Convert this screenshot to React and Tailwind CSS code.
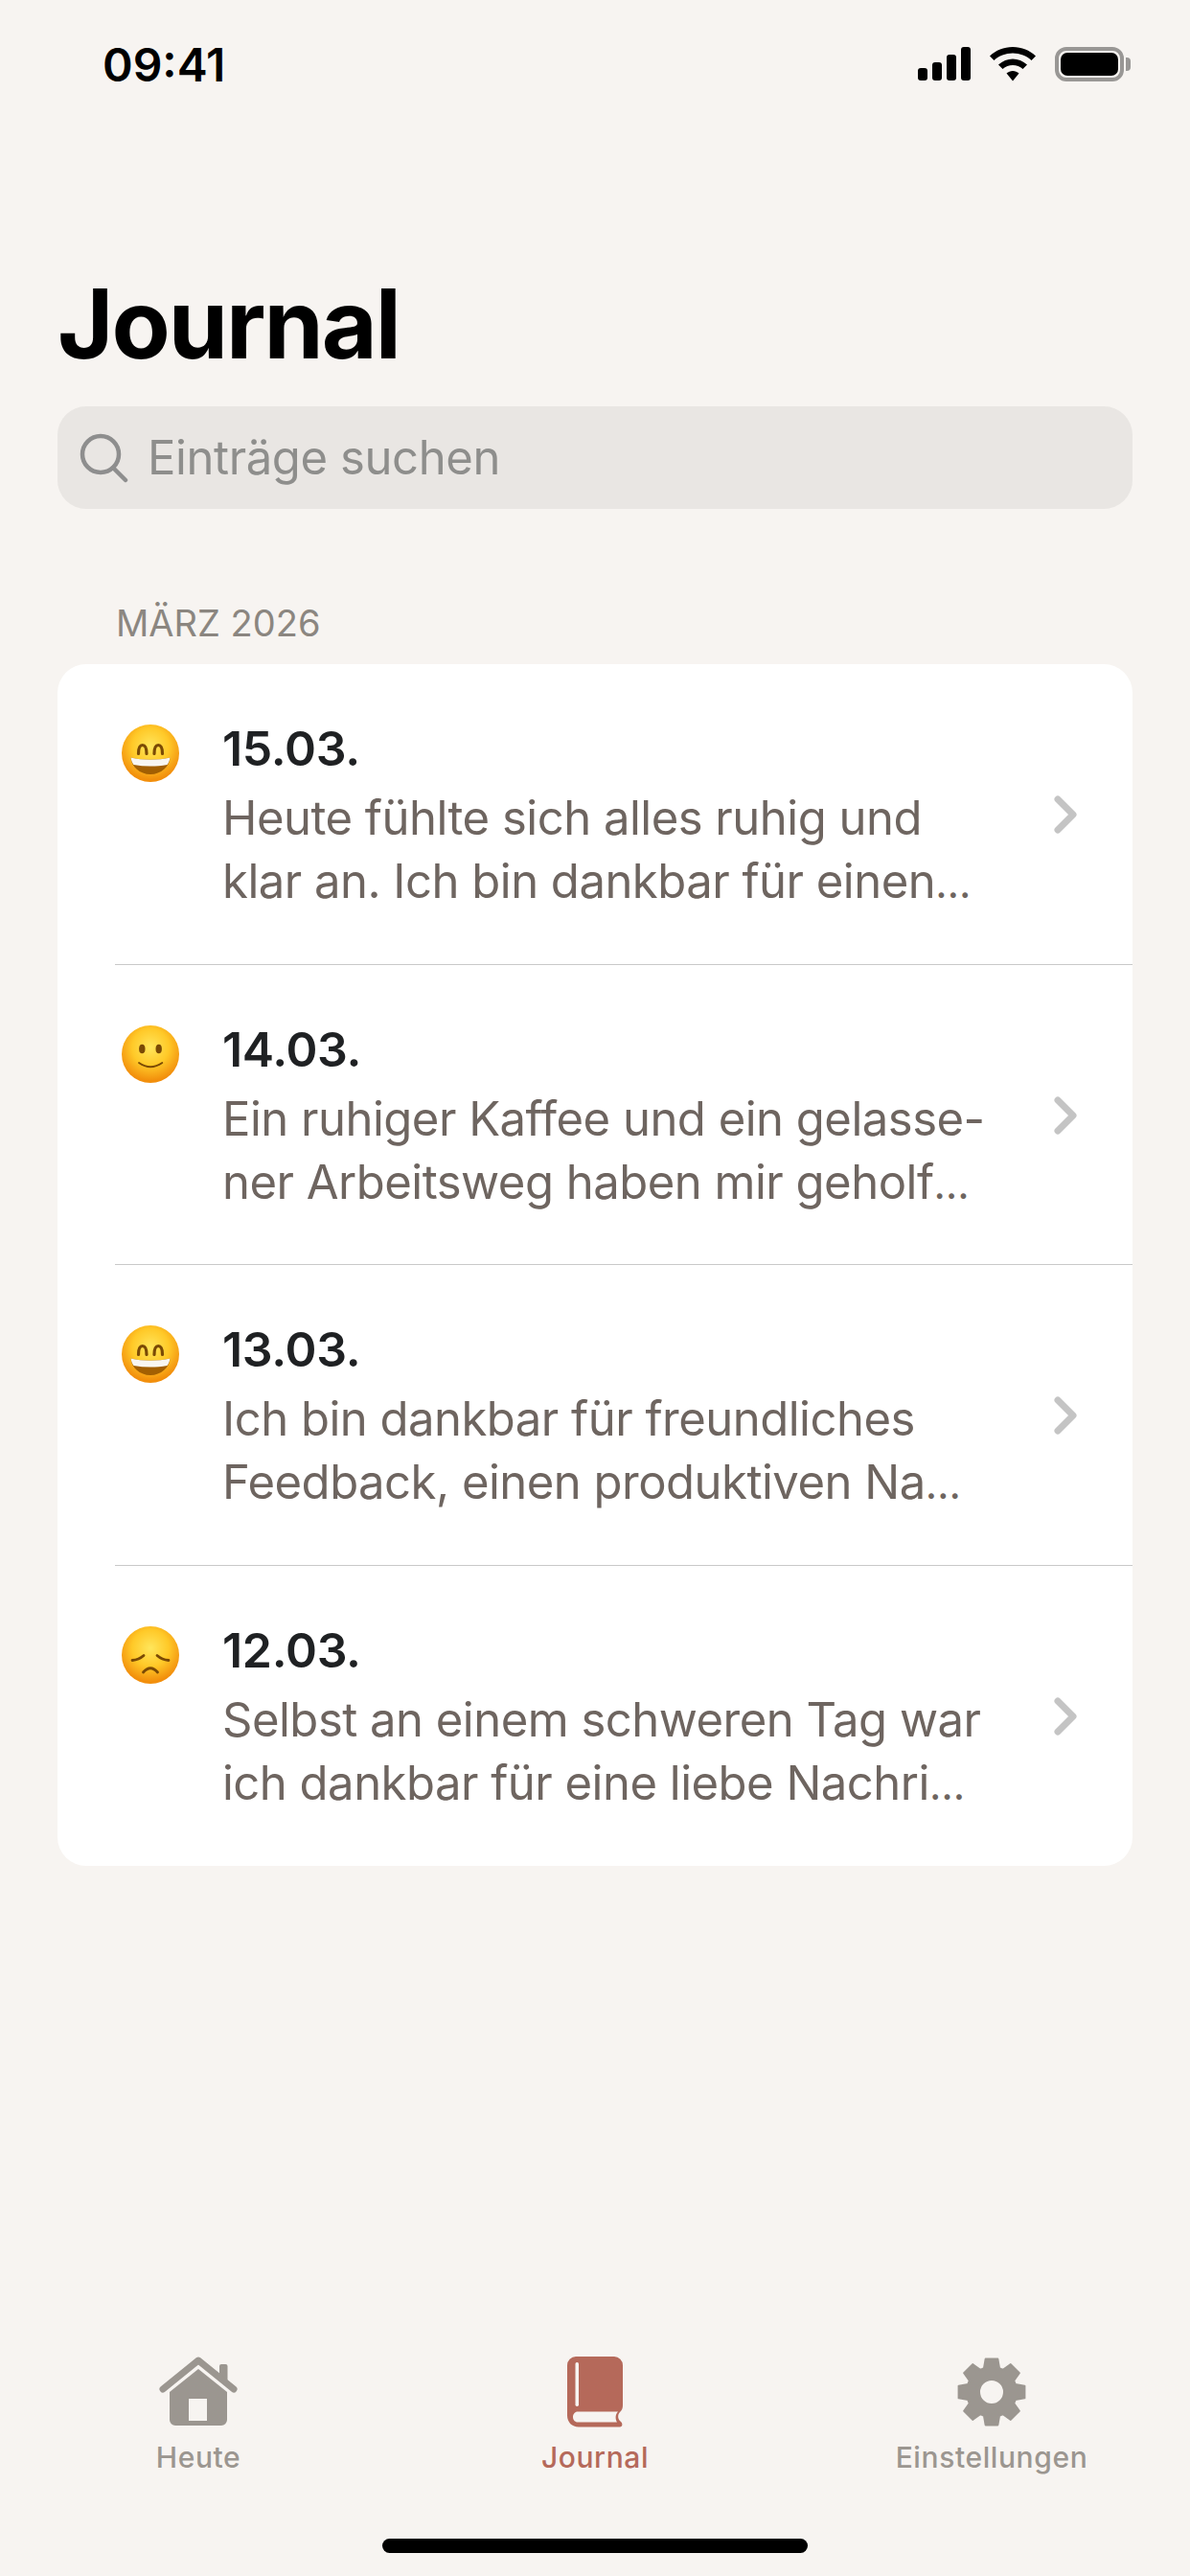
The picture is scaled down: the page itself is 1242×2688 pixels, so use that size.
const entries = [
  { date: "15.03.", mood: "grin", lines: ["Heute fühlte sich alles ruhig und", "klar an. Ich bin dankbar für einen"] },
  { date: "14.03.", mood: "smile", lines: ["Ein ruhiger Kaffee und ein gelasse-", "ner Arbeitsweg haben mir geholf"] },
  { date: "13.03.", mood: "grin", lines: ["Ich bin dankbar für freundliches", "Feedback, einen produktiven Na"] },
  { date: "12.03.", mood: "sad", lines: ["Selbst an einem schweren Tag war", "ich dankbar für eine liebe Nachri"] },
];

function gearPoints() {
  const pts = [];
  for (let i = 0; i < 8; i++) {
    const a = (i * 45 - 90) * (Math.PI / 180);
    const offs = [[26, -18], [35, -10.5], [35, 10.5], [26, 18]];
    offs.forEach(([r, d]) => {
      const t = a + (d * Math.PI) / 180;
      pts.push(`${(36 + r * Math.cos(t)).toFixed(2)},${(36 + r * Math.sin(t)).toFixed(2)}`);
    });
  }
  return pts.join(" ");
}

function Emoji({ mood }) {
  const stroke = "#7a4a05";
  return (
    <svg width="60" height="60" viewBox="0 0 60 60" className="shrink-0">
      <defs>
        <radialGradient id={`face-${mood}`} cx="50%" cy="38%" r="58%">
          <stop offset="0%" stopColor="#ffe65c" />
          <stop offset="55%" stopColor="#ffc928" />
          <stop offset="100%" stopColor="#f28f0c" />
        </radialGradient>
      </defs>
      <circle cx="30" cy="30" r="30" fill={`url(#face-${mood})`} />
      {mood === "grin" && (
        <g>
          <path d="M17.5 30.500C17.500 24 19.500 21.500 21.700 21.500S26 24 26 30.500" fill="none" stroke={stroke} strokeWidth="3.200" strokeLinecap="round" />
          <path d="M34 30.500C34 24 36 21.500 38.200 21.500S42.500 24 42.500 30.500" fill="none" stroke={stroke} strokeWidth="3.200" strokeLinecap="round" />
          <path d="M9.500 34.500C22 37.500 38 37.500 50.500 34.500C50 44 41 52 30 52S10 44 9.500 34.500Z" fill="#a25f02" />
          <path d="M9.500 34.500C22 37.500 38 37.500 50.500 34.500C50 38 49 40 47.500 42C36 44 24 44 12.500 42C11 40 10 38 9.500 34.500Z" fill="#f8f6f2" />
        </g>
      )}
      {mood === "smile" && (
        <g fill={stroke}>
          <ellipse cx="21.3" cy="24.5" rx="3.2" ry="4.7" />
          <ellipse cx="38.7" cy="24.5" rx="3.2" ry="4.7" />
          <path d="M18 39Q30 47.5 42.3 39" fill="none" stroke={stroke} strokeWidth="1.8" strokeLinecap="round" />
        </g>
      )}
      {mood === "sad" && (
        <g fill="none" stroke={stroke} strokeWidth="2.8" strokeLinecap="round">
          <path d="M11 35.5Q18 35 23 30.5" />
          <path d="M49 35.5Q42 35 37 30.5" />
          <path d="M22.5 48Q30 39.5 37.5 48" />
        </g>
      )}
    </svg>
  );
}

function Row({ entry, last }) {
  return (
    <div className={`ml-[60px] h-[313.5px] flex pr-[58px] ${last ? "" : "border-b border-[#c9c9c9]"}`}>
      <div className="ml-[7px] mt-[63px]">
        <Emoji mood={entry.mood} />
      </div>
      <div className="ml-[45px] flex-1 pt-[55px]">
        <div className="text-[50px] leading-[66px] font-semibold text-[#1f2123] tracking-[-0.3px]">{entry.date}</div>
        <div className="mt-[7px] text-[49px] leading-[66px] text-[#6e6560] whitespace-nowrap tracking-[-0.5px]">
          <div>{entry.lines[0]}</div>
          <div>
            {entry.lines[1]}
            <span className="text-[43px]">…</span>
          </div>
        </div>
      </div>
      <div className="flex items-center pt-[2px]">
        <svg width="24" height="40" viewBox="0 0 24 40" fill="none" stroke="#c4c4c4" strokeWidth="7" strokeLinecap="round" strokeLinejoin="round">
          <path d="M4 4L20 20L4 36" />
        </svg>
      </div>
    </div>
  );
}

function Tab({ label, active, children }) {
  return (
    <div className="w-[414px] flex flex-col items-center">
      <div className="h-[74px] flex items-center justify-center">{children}</div>
      <div className={`mt-[11px] text-[30px] leading-[40px] tracking-[0.6px] font-medium ${active ? "text-[#b5695a]" : "text-[#9b9690]"}`}>{label}</div>
    </div>
  );
}

export default function App() {
  return (
    <div className="w-[1242px] h-[2688px] bg-[#f7f4f1] flex flex-col font-['Inter',sans-serif]">
      {/* Status bar */}
      <div className="h-[134px] flex justify-between pt-[44px] pl-[107px] pr-[62px]">
        <div className="text-[48px] leading-[48px] font-semibold text-black">09:41</div>
        <div className="flex items-start gap-[20px] pt-[5px]">
          <svg width="55" height="35" viewBox="0 0 55 35" fill="black">
            <rect x="0" y="22" width="10" height="13" rx="3" />
            <rect x="15" y="16" width="10" height="19" rx="3" />
            <rect x="30" y="8" width="10" height="27" rx="3" />
            <rect x="45" y="0" width="10" height="35" rx="3" />
          </svg>
          <svg width="48" height="36" viewBox="0 0 48 36" fill="black">
            <path d="M24 0C14.5 0 6.500 3.500 0 9.500L4.500 14C9.500 9.300 16.500 6.500 24 6.500S38.500 9.300 43.500 14L48 9.500C41.500 3.500 33.500 0 24 0Z" />
            <path d="M24 12.500C18.500 12.500 13.500 14.500 9 18.500L13.500 23C16.500 20.500 20 19 24 19S31.500 20.500 34.500 23L39 18.500C34.500 14.500 29.500 12.500 24 12.500Z" />
            <path d="M24 25C21.500 25 19.500 26 17.500 27.500L24 35.500L30.500 27.500C28.500 26 26.500 25 24 25Z" />
          </svg>
          <div className="flex items-center">
            <div className="w-[72px] h-[36px] rounded-[12px] border-[4px] border-[#999795] p-[2px]">
              <div className="w-full h-full bg-black rounded-[7px]" />
            </div>
            <div className="ml-[2px] w-[5px] h-[14px] bg-[#999795] rounded-r-[4px]" />
          </div>
        </div>
      </div>

      {/* Title and search */}
      <div className="px-[60px]">
        <h1 className="mt-[144px] text-[100px] leading-[120px] font-bold text-black tracking-[-2px]">Journal</h1>
        <div className="mt-[26px] h-[107px] rounded-[30px] bg-[#e9e6e3] flex items-center pl-[22px] gap-[20px]">
          <svg width="52" height="52" viewBox="0 0 52 52" fill="none" stroke="#8e8e8e" strokeWidth="4.500" strokeLinecap="round">
            <circle cx="23" cy="22" r="19" />
            <path d="M36 36L49 49" />
          </svg>
          <span className="text-[49px] leading-[60px] text-[#8e8e8c] tracking-[-0.4px]">Einträge suchen</span>
        </div>
        <div className="mt-[96px] pl-[61px] text-[38px] leading-[46px] text-[#8b8680]">MÄRZ 2026</div>
      </div>

      {/* Entries */}
      <div className="mx-[60px] mt-[20px] bg-white rounded-[30px]">
        {entries.map((e, i) => (
          <Row key={e.date} entry={e} last={i === entries.length - 1} />
        ))}
      </div>

      {/* Tab bar */}
      <div className="mt-auto flex justify-center">
        <Tab label="Heute">
          <svg width="82" height="74" viewBox="0 0 82 74" fill="#9b9690">
            <path d="M4 34L41 4L78 34" fill="none" stroke="#f7f4f1" strokeWidth="14" strokeLinecap="round" strokeLinejoin="round" />
            <rect x="63" y="8" width="8.500" height="18" rx="2" />
            <path d="M4 34L41 4L78 34" fill="none" stroke="#9b9690" strokeWidth="7" strokeLinecap="round" strokeLinejoin="round" />
            <path fillRule="evenodd" d="M41 13L71 37V66A6 6 0 0 1 65 72H17A6 6 0 0 1 11 66V37ZM31 44V67H50V44Z" />
          </svg>
        </Tab>
        <Tab label="Journal" active>
          <svg width="58" height="74" viewBox="0 0 58 74" fill="#b5695a">
            <path fillRule="evenodd" d="M9 0H49A9 9 0 0 1 58 9V51C58 54 57 56 55 58C52 61 53 66 56 68C58 69.500 58 73.500 55 73.500H12C5 73.500 0 68.500 0 61.500V9A9 9 0 0 1 9 0ZM11 57.500H53C50 60.500 50 65 52 68.500H11C8 68.500 6 66 6 63S8 57.500 11 57.500Z" />
            <rect x="8.500" y="6" width="3.500" height="46" rx="1.700" fill="#f7f4f1" />
          </svg>
        </Tab>
        <Tab label="Einstellungen">
          <svg width="72" height="72" viewBox="0 0 72 72">
            <path
              fillRule="evenodd"
              fill="#9b9690"
              stroke="#9b9690"
              strokeWidth="2"
              strokeLinejoin="round"
              d={`M${gearPoints().replaceAll(" ", "L")}ZM23 36A13 13 0 1 0 49 36A13 13 0 1 0 23 36Z`}
            />
          </svg>
        </Tab>
      </div>

      {/* Home indicator */}
      <div className="mt-[65px] mb-[24px] mx-auto w-[444px] h-[15px] rounded-full bg-black shrink-0" />
    </div>
  );
}
